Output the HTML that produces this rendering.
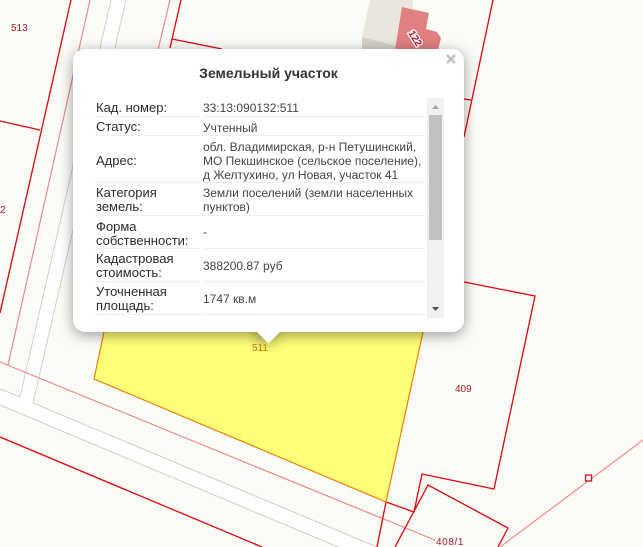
<!DOCTYPE html>
<html><head><meta charset="utf-8"><style>
html,body{margin:0;padding:0}
body{width:643px;height:547px;overflow:hidden;position:relative;background:#fcfcf7;font-family:"Liberation Sans",Arial,sans-serif}
svg{position:absolute;left:0;top:0}
.lb{font-size:10px;fill:#a5182a;font-family:"Liberation Sans",sans-serif;paint-order:stroke;stroke:#fcfcf7;stroke-width:1.5px}
.popup{position:absolute;left:73px;top:49px;width:391px;height:283px;background:#fff;border-radius:12px;box-shadow:0 3px 14px rgba(0,0,0,.4)}
.tipc{position:absolute;left:248px;top:332px;width:40px;height:20px;overflow:hidden}
.tip{width:17px;height:17px;margin:-9px auto 0;background:#fff;transform:rotate(45deg);box-shadow:0 3px 14px rgba(0,0,0,.4)}
.title{position:absolute;left:73px;width:391px;top:65px;text-align:center;font-weight:bold;color:#333;line-height:16px;font-size:14px}
.x{position:absolute;left:444px;top:52px;width:14px;height:14px}
.c{position:absolute;display:flex;align-items:center;line-height:14px;border-bottom:1px solid #eee;box-sizing:border-box;padding-top:2px}
.a{left:95px;width:105px;padding-left:1px;font-size:13px;color:#2b2b2b}
.b{left:202px;width:223px;padding-left:1px;font-size:12px;color:#444}
</style></head><body>
<svg width="643" height="547" viewBox="0 0 643 547" fill="none">
<polygon points="111,0 126,0 33,403 377,547 338,547 0,405 0,389 20,397" fill="#fff"/>
<polygon points="104,332 94,379 386,502 423,332" fill="#ffff78"/>
<g stroke="#cfcfca" stroke-width="1">
<polyline points="111,0 20,397 0,389"/>
<polyline points="126,0 33,403 377,547"/>
<line x1="0" y1="405" x2="338" y2="547"/>
</g>
<g stroke="#ec8a8a" stroke-width="1.2">
<line x1="90" y1="0" x2="8" y2="365"/>
<line x1="170" y1="0" x2="158" y2="50"/>
<line x1="0" y1="362" x2="435" y2="540"/>
<line x1="643" y1="440" x2="500" y2="547"/>
</g>
<g stroke="#e8000f" stroke-width="1.3">
<line x1="71" y1="0" x2="0" y2="313"/>
<polyline points="0,121 40,130"/>
<polyline points="181,0 170,48"/>
<polyline points="172,39 222,49"/>
<polyline points="493,0 464,137"/>
<polyline points="464,99 471,100"/>
<polyline points="464,282 535,296 494,489 422,474 414,512 386,502 377,547"/>
<polyline points="395,547 428,485 508,528 498,547"/>
<line x1="0" y1="437" x2="262" y2="547"/>
</g>
<polyline points="104,332 94,379 386,502 423,332" stroke="#f08000" stroke-width="1.2"/>
<rect x="585.5" y="475" width="6" height="6" stroke="#c8202c" stroke-width="1.4" fill="#fcfcf7"/>
<polygon points="370,0 413,0 411,50 362,50 362,37" fill="#e9e6e0"/>
<polygon points="362,37 396,46 395,50 362,50" fill="#d4d2ca"/>
<polygon points="402,7 429,13 426,29 437,32 441,38 438,50 395,50" fill="#e08080"/>
<text transform="translate(408,33) rotate(58)" font-size="10" font-weight="bold" fill="#c0102a" stroke="#fff" stroke-width="2.5" paint-order="stroke" font-family="Liberation Sans,sans-serif">122</text>
<text class="lb" x="11" y="31">513</text>
<text class="lb" x="0" y="213">2</text>
<text class="lb" x="455" y="392">409</text>
<text class="lb" x="436" y="545" letter-spacing=".6">408/1</text>
</svg>
<div class="popup"></div>
<div class="tipc"><div class="tip"></div></div>
<svg width="643" height="547"><text x="252" y="351" font-size="10" fill="#c07808" font-family="Liberation Sans,sans-serif">511</text></svg>
<div class="title">Земельный участок</div>
<svg class="x" viewBox="0 0 14 14"><path d="M3 3L11 11M11 3L3 11" stroke="#c3c3c3" stroke-width="2.6"/></svg>

<div class="c a" style="top:98px;height:19px">Кад. номер:</div><div class="c b" style="top:98px;height:19px">33:13:090132:511</div>
<div class="c a" style="top:117px;height:19px">Статус:</div><div class="c b" style="top:117px;height:19px;padding-top:3px">Учтенный</div>
<div class="c a" style="top:136px;height:47px;padding-top:3px">Адрес:</div><div class="c b" style="top:136px;height:47px;padding-top:4px">обл. Владимирская, р-н Петушинский,<br>МО Пекшинское (сельское поселение),<br>д Желтухино, ул Новая, участок 41</div>
<div class="c a" style="top:183px;height:33px">Категория<br>земель:</div><div class="c b" style="top:183px;height:33px">Земли поселений (земли населенных<br>пунктов)</div>
<div class="c a" style="top:216px;height:33px;padding-top:3px">Форма<br>собственности:</div><div class="c b" style="top:216px;height:33px;padding-top:0">-</div>
<div class="c a" style="top:249px;height:33px">Кадастровая<br>стоимость:</div><div class="c b" style="top:249px;height:33px;padding-top:1px">388200.87 руб</div>
<div class="c a" style="top:282px;height:33px">Уточненная<br>площадь:</div><div class="c b" style="top:282px;height:33px">1747 кв.м</div>

<svg width="643" height="547">
<rect x="427" y="98" width="17" height="220" fill="#f1f1f1"/>
<rect x="429" y="115" width="13" height="125" fill="#c1c1c1"/>
<polygon points="432,109 439,109 435.5,105" fill="#a3a3a3"/>
<polygon points="432,307 439,307 435.5,311" fill="#505050"/>
</svg>
</body></html>
